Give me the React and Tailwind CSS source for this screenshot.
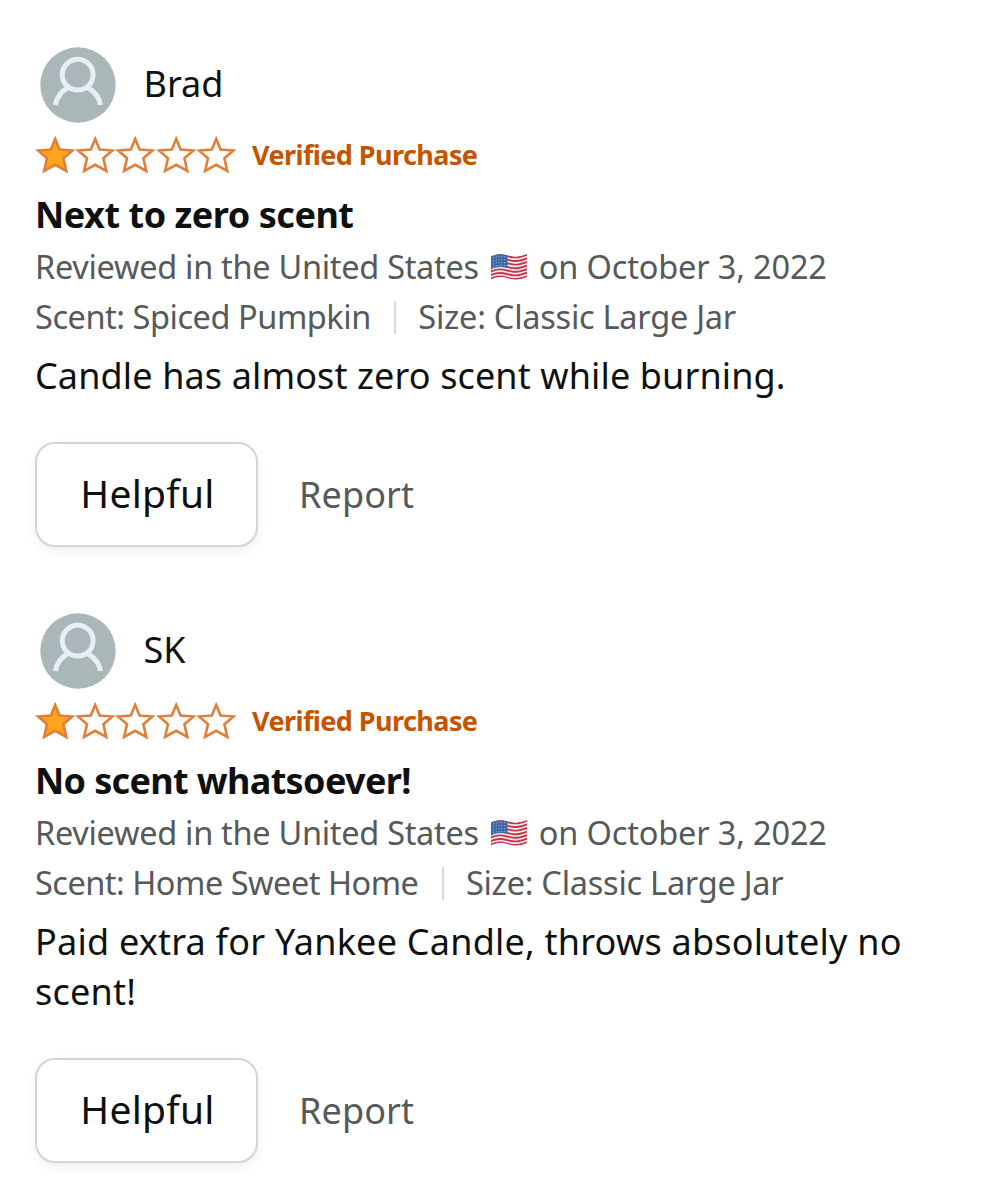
const STAR = "M20.2 3 L24.6 13.6 L37.4 14.5 L28.4 22.3 L31.3 35 L20.2 28.800 L9.100 35 L12 22.3 L3 14.5 L15.8 13.6 Z";

function Avatar() {
  return (
    <svg className="h-[76px] w-[76px] shrink-0" viewBox="0 0 76 76" fill="none">
      <circle cx="38" cy="38" r="37.7" fill="#a9b7b8" />
      <g stroke="#e9edf5" strokeWidth="5">
        <circle cx="37.7" cy="27.700" r="15.4" />
        <path d="M15.3 58 C16.500 51 21 44.500 28.500 40 M47 40 C54.500 44.500 59.500 51 60.500 58" />
      </g>
    </svg>
  );
}

function Stars({ rating }) {
  return (
    <div className="flex">
      {[0, 1, 2, 3, 4].map((i) => (
        <svg key={i} className="h-[38px] w-[40.2px]" viewBox="0 0 40.2 38">
          <path d={STAR} fill={i < rating ? "#ffa41c" : "#fff"} stroke="#e07f38" strokeWidth="2.6" />
        </svg>
      ))}
    </div>
  );
}

function Flag() {
  return (
    <svg className="mx-[11px] h-[28px] w-[38px] shrink-0" viewBox="0 0 38 28">
      <defs>
        <clipPath id="flag">
          <path d="M1 3.500 C8 0 13 1 19 2.500 C26 4.500 31 3 37 1 V24 C30 27 25 27 19 25.500 C12 23.500 7 23.500 1 26.500 Z" />
        </clipPath>
      </defs>
      <g clipPath="url(#flag)">
        <rect width="38" height="28" fill="#f4eeee" />
        {[0, 1, 2, 3, 4, 5, 6].map((i) => (
          <path
            key={i}
            transform={`translate(0 ${i * 3.6})`}
            d="M0 4.500 C8 0.500 13 2 19 3.500 C26 5.500 31 4 38 1.500"
            fill="none"
            stroke="#c8354a"
            strokeWidth="1.9"
          />
        ))}
        <path d="M0 0 H17.500 V15 C11 13.500 7 13.500 0 17 Z" fill="#3f68a8" />
        <path
          d="M3 5 C8 3 12 3 17 4 M3 8 C8 6 12 6 17 7 M3 11 C8 9 12 9 17 10 M3 14 C8 12 12 12 17 13"
          fill="none"
          stroke="#a9bfdf"
          strokeWidth="1"
          strokeDasharray="1 1.800"
        />
      </g>
    </svg>
  );
}

const reviews = [
  {
    name: "Brad",
    title: "Next to zero scent",
    titleClass: "tracking-[-0.47px]",
    scent: "Spiced Pumpkin",
    scentClass: "tracking-[-0.45px]",
    body: "Candle has almost zero scent while burning.",
    bodyClass: "tracking-[0.12px]",
  },
  {
    name: "SK",
    title: "No scent whatsoever!",
    titleClass: "tracking-[-0.65px]",
    scent: "Home Sweet Home",
    scentClass: "tracking-[-0.5px]",
    body: "Paid extra for Yankee Candle, throws absolutely no scent!",
    bodyClass: "tracking-[0.23px]",
  },
];

function Review({ review }) {
  return (
    <article>
      <div className="flex h-[76px] items-center pl-[5px]">
        <Avatar />
        <span className="ml-[27.500px] pb-[2px] text-[36px] leading-[50px]">{review.name}</span>
      </div>
      <div className="mt-[13px] flex h-[38px] items-center">
        <Stars rating={1} />
        <span className="ml-[16px] text-[27px] leading-[36px] font-bold tracking-[-0.57px] text-[#c45500]">Verified Purchase</span>
      </div>
      <h2 className={"mt-[16px] text-[36px] leading-[50px] font-bold " + review.titleClass}>{review.title}</h2>
      <div className="mt-[2px] flex h-[50px] items-center text-[32.5px] leading-[50px] whitespace-nowrap text-[#565959]">
        <span className="tracking-[-0.3px]">Reviewed in the United States</span>
        <Flag />
        <span className="tracking-[-0.16px]">on October 3, 2022</span>
      </div>
      <div className="flex h-[50px] items-center text-[32.5px] leading-[50px] whitespace-nowrap text-[#565959]">
        <span className={review.scentClass}>Scent: {review.scent}</span>
        <span className="mr-[22px] ml-[23.500px] h-[33px] w-[2px] bg-[#d5d9d9]" />
        <span className="tracking-[-0.25px]">Size: Classic Large Jar</span>
      </div>
      <p className={"mt-[9px] w-[910px] text-[36px] leading-[50px] " + review.bodyClass}>{review.body}</p>
      <div className="mt-[41px] flex h-[105px] items-center">
        <button className="h-[105px] w-[223px] rounded-[20px] border-2 border-[#d3d5d5] bg-white pb-[2px] pl-[2px] text-[39px] tracking-[0.25px] shadow-[0_4px_10px_rgba(213,217,217,0.4)]">
          Helpful
        </button>
        <a className="ml-[41px] text-[36px] tracking-[0.1px] text-[#565959]">Report</a>
      </div>
    </article>
  );
}

export default function App() {
  return (
    <main className="flex min-h-[1200px] w-full flex-col gap-[66px] bg-white pt-[47px] pl-[35px] font-['Noto_Sans',sans-serif] text-[#0f1111]">
      {reviews.map((r) => (
        <Review key={r.name} review={r} />
      ))}
    </main>
  );
}
